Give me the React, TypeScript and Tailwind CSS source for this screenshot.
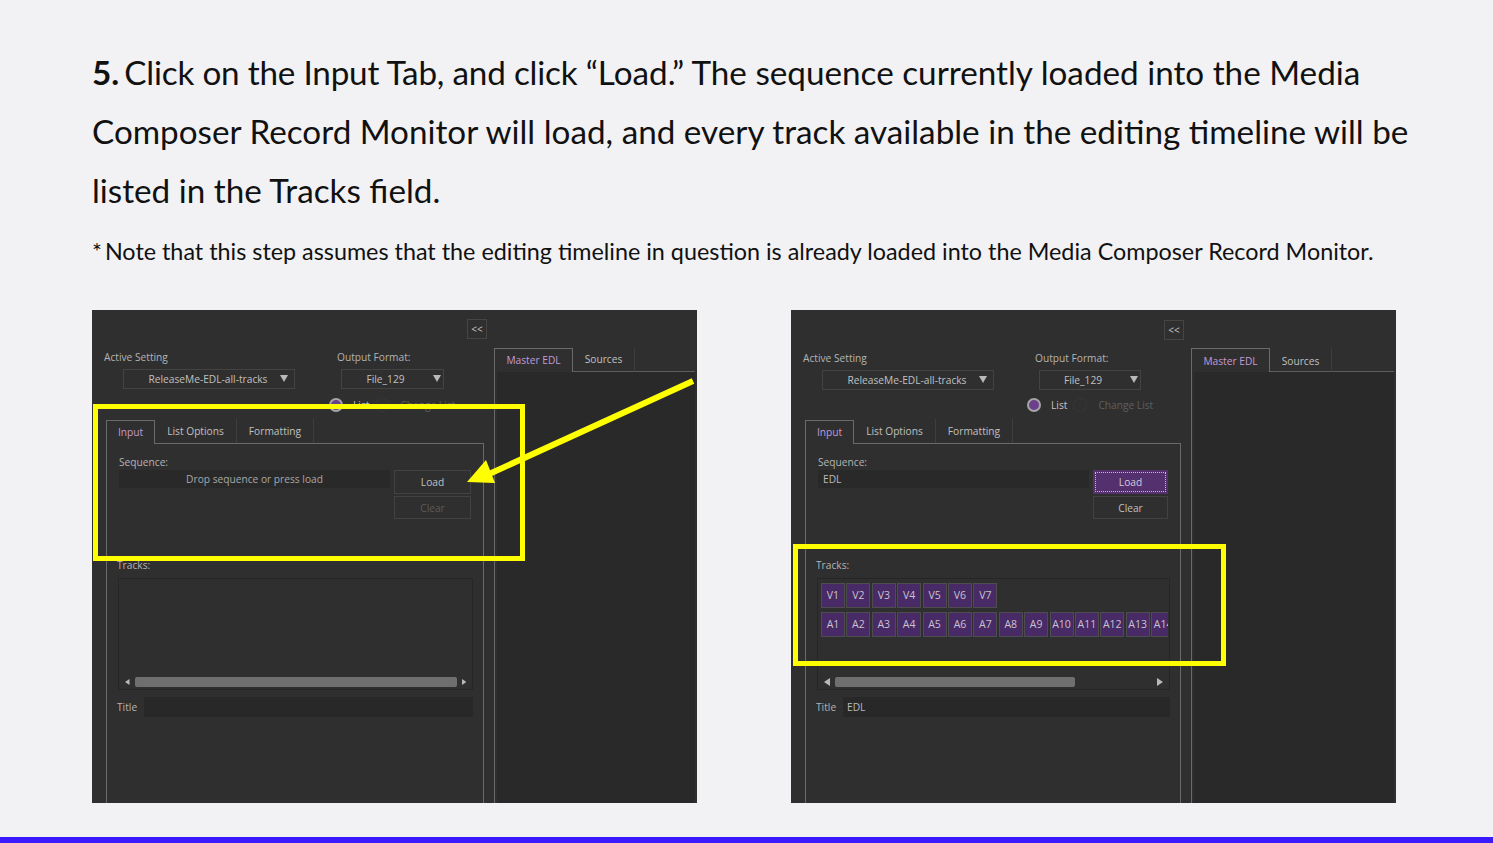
import React from "react";

const ui = "font-['Open_Sans',sans-serif] text-[10.2px] leading-[14px] text-[#b4b4b4]";

function Tri({ dir, className }: { dir: "down" | "left" | "right"; className?: string }) {
  const pts = dir === "down" ? "0,0 8,0 4,7" : dir === "left" ? "6,0 6,8 0,4" : "0,0 0,8 6,4";
  const w = dir === "down" ? 8 : 6;
  const h = dir === "down" ? 7 : 8;
  return (
    <svg width={w} height={h} viewBox={`0 0 ${w} ${h}`} className={className}>
      <polygon points={pts} fill="#b9b9b9" />
    </svg>
  );
}

function Select({ label, box, text }: { label: string; box: string; text: string }) {
  return (
    <div className={`${box} mt-[5px] h-[20px] flex items-center justify-end border border-[#434343] text-[#c0c0c0]`}>
      <span className={`flex-1 text-center ${text}`}>{label}</span>
      <Tri dir="down" />
    </div>
  );
}

function TrackRow({ names }: { names: string[] }) {
  return (
    <div className="flex gap-[1.4px] whitespace-nowrap">
      {names.map((n) => (
        <div
          key={n}
          className="w-[24px] h-[25px] shrink-0 flex items-center justify-center bg-[#472a66] border border-[#4d4d4d] text-[#c9c3cd] text-[10.5px]"
        >
          {n}
        </div>
      ))}
    </div>
  );
}

function Tab({ label, active, w }: { label: string; active?: boolean; w: string }) {
  return (
    <div
      className={`${w} h-[24px] flex items-center justify-center ${
        active ? "border-x border-t border-[#6a6a6a] text-[#c39ad8] relative top-px bg-[#2f2f2f] pb-px" : "border-r border-[#3e3e3e] text-[#c0c0c0]"
      }`}
    >
      {label}
    </div>
  );
}

function Panel({ filled, children }: { filled: boolean; children?: React.ReactNode }) {
  return (
    <div className={`relative w-[605px] h-[493px] overflow-hidden bg-[#2f2f2f] flex ${ui}`}>
      {/* left column */}
      <div className={`${filled ? "w-[400px] pt-[10px]" : "w-[402px] pt-[9px]"} shrink-0 flex flex-col`}>
        <div className="flex justify-end pr-[7px]">
          <div className="w-[20px] h-[20px] flex items-center justify-center border border-[#454545] text-[10px] text-[#c8c8c8]">
            &lt;&lt;
          </div>
        </div>
        <div className="flex mt-[11px]">
          <div className={`${filled ? "w-[244px]" : "w-[245px]"} pl-[12px]`}>
            <div>Active Setting</div>
            <Select label="ReleaseMe-EDL-all-tracks" box="w-[172px] ml-[19px] pr-[6px]" text="pl-[12px]" />
          </div>
          <div>
            <div>Output Format:</div>
            <Select
              label="File_129"
              box={`${filled ? "w-[102px]" : "w-[103px]"} ml-[4px] pr-[2px]`}
              text="pr-[4px]"
            />
          </div>
        </div>
        <div className={`flex items-center h-[14px] ${filled ? "mt-[8px] pl-[236px]" : "mt-[9px] pl-[237px]"}`}>
          <span className="w-[14px] h-[14px] rounded-full bg-[#6a3f8c] border-2 border-[#a5a5a5]" />
          <span className="ml-[10px] text-[#c4c4c4]">List</span>
          <span className="w-[14px] h-[14px] ml-[6px] rounded-full border border-dotted border-[#3f3f3f]" />
          <span className="ml-[11px] text-[#5f5f5f]">Change List</span>
        </div>
        <div className="flex mt-[7px] ml-[14px]">
          <Tab label="Input" active w="w-[49px]" />
          <Tab label="List Options" w="w-[82px]" />
          <Tab label="Formatting" w="w-[77px]" />
        </div>
        <div className="ml-[14px] mr-[10px] flex-1 border-x border-t border-[#6a6a6a] pt-[11px] px-[10px]">
          <div className="pl-[2px]">Sequence:</div>
          <div className="flex items-start gap-[4px] h-[49px] mt-px pl-[2px]">
            <div className={`flex-1 h-[18px] bg-[#292929] flex items-center ${filled ? "pl-[5px] text-[#bbbbbb]" : "justify-center text-[#a8a8a8]"}`}>
              {filled ? "EDL" : "Drop sequence or press load"}
            </div>
            <div className={`${filled ? "w-[75px]" : "w-[77px]"} mr-[2px] flex flex-col gap-[2px]`}>
              <div
                className={`h-[24px] flex items-center justify-center ${
                  filled ? "bg-[#54306f] outline-1 outline-dotted -outline-offset-3 outline-[#c9b8d4] text-[#d5cbdb]" : "border border-[#424242] text-[#c0c0c0]"
                }`}
              >
                Load
              </div>
              <div className={`h-[23px] pt-[2px] flex items-center justify-center border border-[#424242] ${filled ? "text-[#c0c0c0]" : "text-[#5a5a5a]"}`}>
                Clear
              </div>
            </div>
          </div>
          <div className="mt-[39px]">Tracks:</div>
          <div className="mt-[6px] ml-px h-[112px] border border-[#262626] flex flex-col px-[3px]">
            <div className="flex-1 overflow-hidden pt-[4px] mr-[-2px]">
              {filled && (
                <div className="flex flex-col gap-[4px]">
                  <TrackRow names={["V1", "V2", "V3", "V4", "V5", "V6", "V7"]} />
                  <TrackRow names={["A1", "A2", "A3", "A4", "A5", "A6", "A7", "A8", "A9", "A10", "A11", "A12", "A13", "A14"]} />
                </div>
              )}
            </div>
            <div className="h-[10px] mb-[2px] flex items-center gap-[5px] pl-[3px] pr-[3px]">
              <Tri dir="left" />
              <div className="flex-1 h-full">
                <div className={`${filled ? "w-[240px]" : "w-[322px]"} h-full rounded-[2px] bg-[#6f6f6f]`} />
              </div>
              <Tri dir="right" />
            </div>
          </div>
          <div className="flex items-center gap-[6px] mt-[7px] h-[20px]">
            <span className="w-[20px]">Title</span>
            <div className="flex-1 h-full ml-px bg-[#282828] pl-[4px] flex items-center text-[#bbbbbb]">{filled ? "EDL" : ""}</div>
          </div>
        </div>
      </div>
      {/* right column */}
      <div className="flex-1 flex flex-col pt-[38px]">
        <div className="flex h-[24px] mr-[2px]">
          <div className={`w-[79px] flex items-center justify-center border-x border-t border-[#6a6a6a] text-[#c39ad8] ${filled ? "pt-[2px]" : ""}`}>Master EDL</div>
          <div className={`w-[62px] flex items-center justify-center border-r border-b border-r-[#3e3e3e] border-b-[#5e5e5e] text-[#c0c0c0] ${filled ? "pt-[3px]" : ""}`}>Sources</div>
          <div className="flex-1 border-b border-[#5e5e5e]" />
        </div>
        <div className="flex-1 border-l border-[#6a6a6a] pl-[2px] mr-[2px]">
          <div className="h-full bg-[#292929]" />
        </div>
      </div>
      {children}
    </div>
  );
}

export default function App() {
  return (
    <div className="h-[843px] flex flex-col bg-[#f2f2f4] text-[#111111] font-['Lato',sans-serif] overflow-hidden">
      <div className="flex-1 pl-[92px] pr-[80px] pt-[42.5px]">
        <p className="text-[33.25px] leading-[59.3px] w-[1330px]">
          <b className="[word-spacing:-3px]">5. </b>
          <span className="tracking-[-0.2px]">Click on the Input Tab, and click </span>
          “Load.” The sequence currently loaded into the Media Composer Record Monitor will load, and every track available in the editing timeline will be listed in the Tracks field.
        </p>
        <p className="text-[23.35px] leading-[30px] mt-[15.5px] whitespace-nowrap">
          <span className="[word-spacing:-3px]">* </span>
          Note that this step assumes that the editing timeline in question is already loaded into the Media Composer Record Monitor.
        </p>
        <div className="flex justify-between w-[1304px] mt-[44px]">
          <Panel filled={false}>
            <div className="absolute left-[1px] top-[94px] w-[432px] h-[157px] border-[5px] border-[#ffff00]" />
            <svg className="absolute inset-0" width="605" height="493" viewBox="0 0 605 493">
              <line x1="601" y1="71" x2="395" y2="165" stroke="#ffff00" strokeWidth="6" />
              <polygon points="375,172 394,150 403,173" fill="#ffff00" />
            </svg>
          </Panel>
          <Panel filled>
            <div className="absolute left-[2px] top-[234px] w-[433px] h-[122px] border-[5px] border-[#ffff00]" />
          </Panel>
        </div>
      </div>
      <div className="h-[6px] bg-[#3a1aff]" />
    </div>
  );
}
